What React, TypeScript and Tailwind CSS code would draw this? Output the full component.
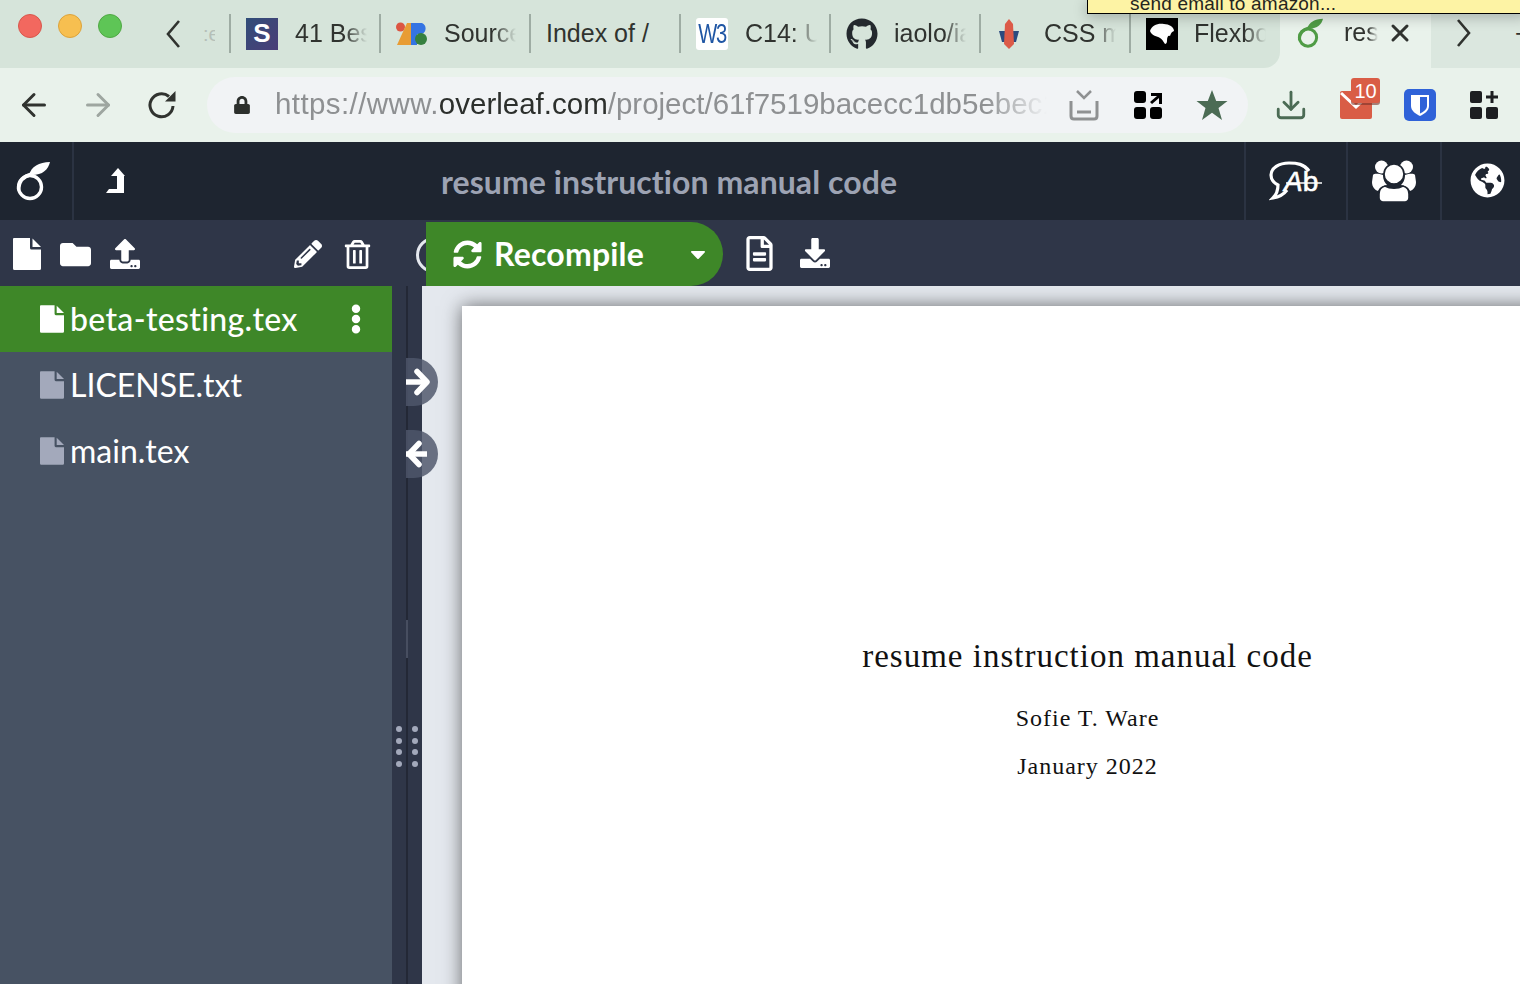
import {
  FaCaretDown,
  FaDownload,
  FaEllipsisV,
  FaFolder,
  FaGithub,
  FaGlobeAmericas,
  FaLock,
  FaPencilAlt,
  FaRegFileAlt,
  FaRegTrashAlt,
  FaSyncAlt,
  FaUpload,
} from "react-icons/fa";
import { FiArrowLeft, FiArrowRight, FiDownload, FiX } from "react-icons/fi";

const OverleafLogo = ({ size, color, weight }: { size: number; color: string; weight: number }) => (
  <svg width={size} height={size} viewBox="0 0 38 40" fill="none">
    <circle cx="15" cy="26" r="11.5" stroke={color} strokeWidth={weight} />
    <path d="M17 13C9 15 4 20 3.5 28" stroke={color} strokeWidth={weight} strokeLinecap="round" />
    <path d="M14 14C16 6 24 1 35 1C33 9 27 15 14 14Z" fill={color} />
  </svg>
);

const FileIcon = ({ width, height, color }: { width: number; height: number; color: string }) => (
  <svg width={width} height={height} viewBox="0 0 28 32" fill={color}>
    <path d="M1 0H17V10Q17 11.5 18.5 11.5H28V30.5Q28 32 26.5 32H1.5Q0 32 0 30.5V1Q0 0 1 0Z" />
    <path d="M19.5 0.5L28 9H19.5Z" />
  </svg>
);

const Chevron = ({ flip }: { flip?: boolean }) => (
  <svg width="16" height="30" viewBox="0 0 16 30" fill="none" className={flip ? "-scale-x-100" : ""}>
    <path d="M14 2L3 15L14 28" stroke="#30332f" strokeWidth="2.6" />
  </svg>
);

const Dots = () => (
  <div className="grid grid-cols-2 gap-x-[10px] gap-y-[5.5px]">
    {Array.from({ length: 8 }).map((_, i) => (
      <span key={i} className="size-[6px] rounded-full bg-[#a3a9bb]" />
    ))}
  </div>
);

const SlackS = () => (
  <div className="flex h-[32px] w-[32px] items-center justify-center bg-gradient-to-br from-[#2f4d78] to-[#4a3d78] text-[26px] font-bold text-white">S</div>
);

const SourceIcon = () => (
  <svg width="32" height="24" viewBox="0 0 32 24">
    <circle cx="4.5" cy="5" r="4.5" fill="#dc5542" />
    <path d="M11 1H15V23H1Z" fill="#e89c34" />
    <path d="M15 1H26A6 6 0 0 1 26 12H15Z" fill="#3574e3" />
    <rect x="15" y="11" width="6" height="12" fill="#3574e3" />
    <circle cx="25" cy="17" r="6" fill="#36803f" />
  </svg>
);

const W3Icon = () => (
  <div className="flex h-[32px] w-[32px] items-center justify-center rounded-[3px] bg-white text-[#1f56a4]">
    <span className="scale-x-[0.72] text-[28px] leading-none tracking-[-2px]">W3</span>
  </div>
);

const CssIcon = () => (
  <svg width="26" height="32" viewBox="0 0 26 32">
    <path d="M3 13L23 13L20 24L6 24Z" fill="#2a4a7f" />
    <path d="M9 6L13 1L17 6L18 26L13 31L8 26Z" fill="#dc5a48" />
  </svg>
);

const FlexIcon = () => (
  <div className="flex h-[32px] w-[32px] items-center justify-center bg-black">
    <svg width="26" height="22" viewBox="0 0 26 22">
      <path d="M1 8C3 2 9 0 15 1C20 1 25 4 25 8C22 9 22 11 21 13C19 12 18 14 18 18C18 20 17 21 16 21C14 18 13 16 11 15C8 13 3 13 1 8Z" fill="white" />
    </svg>
  </div>
);

const fade = "[mask-image:linear-gradient(to_right,black_70%,transparent_100%)]";

const tabs = [
  { icon: <SlackS />, gap: "w-[49px]", label: "41 Bes", text: `w-[72px] ${fade}`, box: "w-[150px] border-r-2" },
  { icon: <SourceIcon />, gap: "w-[48px]", label: "Source", text: `w-[72px] ${fade}`, box: "w-[150px] border-r-2" },
  { icon: null, gap: "w-0", label: "Index of /", text: "w-[120px]", box: "w-[150px] border-r-2" },
  { icon: <W3Icon />, gap: "w-[49px]", label: "C14: U", text: `w-[72px] ${fade}`, box: "w-[150px] border-r-2" },
  { icon: <FaGithub size={32} color="#24292e" />, gap: "w-[48px]", label: "iaolo/ia", text: `w-[72px] ${fade}`, box: "w-[150px] border-r-2" },
  { icon: <CssIcon />, gap: "w-[48px]", label: "CSS m", text: `w-[72px] ${fade}`, box: "w-[150px] border-r-2" },
  { icon: <FlexIcon />, gap: "w-[48px]", label: "Flexbox", text: `w-[72px] ${fade}`, box: "w-[149px]" },
];

function TabStrip() {
  return (
    <div className="relative flex h-[68px] shrink-0 bg-[#e9f2eb]">
      <div className="flex w-[1280px] shrink-0 rounded-br-[16px] bg-[#d6e4da]">
        <div className="flex w-[150px] shrink-0 items-center pb-[16px] pl-[18px]">
          <span className="size-[24px] rounded-full border border-[#d8574c] bg-[#f2685f]" />
          <span className="ml-[16px] size-[24px] rounded-full border border-[#dca33b] bg-[#f7bf50]" />
          <span className="ml-[16px] size-[24px] rounded-full border border-[#50a844] bg-[#5ec556]" />
        </div>
        <div className="mt-[14px] flex h-[39px] items-center">
          <div className="flex h-full w-[81px] shrink-0 items-center border-r-2 border-[#9eaca3] pl-[15px]">
            <Chevron />
            <span className="ml-[22px] w-[12px] overflow-hidden text-[20px] leading-none text-[#b5bfb8]">:e</span>
          </div>
          {tabs.map((t) => (
            <div key={t.label} className={`flex h-full shrink-0 items-center border-[#9eaca3] pl-[15px] ${t.box}`}>
              <div className={`${t.gap} flex shrink-0 items-center`}>{t.icon}</div>
              <span className={`overflow-hidden whitespace-nowrap text-[25px] text-[#30332f] ${t.text}`}>{t.label}</span>
            </div>
          ))}
        </div>
      </div>
      <div className="flex w-[151px] shrink-0 items-center pb-[2px] pl-[16px]">
        <div className="flex w-[48px] shrink-0 items-center">
          <OverleafLogo size={30} color="#4f9c45" weight={4} />
        </div>
        <span className={`w-[34px] overflow-hidden whitespace-nowrap text-[25px] text-[#30332f] ${fade}`}>resume</span>
        <FiX size={28} color="#30332f" strokeWidth={2.6} className="ml-[8px]" />
      </div>
      <div className="flex flex-1 items-center bg-[#dbe7df] pb-[2px] pl-[25px]">
        <Chevron flip />
        <span className="ml-[43px] text-[25px] leading-none text-[#30332f]">+</span>
      </div>
      <div className="absolute left-[1087px] top-[-1px] h-[15px] w-[440px] border border-black bg-[#fdf3a4] pl-[42px] text-[19px] leading-[7px] tracking-[0.2px] text-[#26251e] shadow-[0_3px_14px_rgba(0,0,0,0.25)]">
        send email to amazon...
      </div>
    </div>
  );
}

function AddressBar() {
  return (
    <div className="flex h-[74px] shrink-0 items-center bg-[#e9f2eb] pl-[16px]">
      <FiArrowLeft size={36} color="#30332f" />
      <FiArrowRight size={36} color="#9ea6a0" className="ml-[28px]" />
      <svg width="32" height="32" viewBox="0 0 32 32" fill="none" className="ml-[30px]">
        <path d="M27 17A11.5 11.5 0 1 1 23 7.5" stroke="#30332f" strokeWidth="3" />
        <path d="M19 12.5H29.5V2Z" fill="#30332f" />
      </svg>
      <div className="ml-[29px] flex h-[56px] w-[1041px] items-center rounded-full bg-[#f1f3f5] pl-[26px]">
        <FaLock size={18} color="#2c2f2c" />
        <span className="ml-[24px] w-[772px] overflow-hidden whitespace-nowrap pb-[2px] text-[29.5px] text-[#8e9092] [mask-image:linear-gradient(to_right,black_92%,transparent_100%)]">
          <span className="tracking-[0.4px]">https://www.</span>
          <span className="text-[#2c2f2c]">overleaf.com</span>/project/61f7519bacecc1db5ebec1
        </span>
        <svg width="30" height="32" viewBox="0 0 30 32" fill="none" className="ml-[22px]">
          <path d="M8 2L15 9L22 2" stroke="#8f9192" strokeWidth="2.5" />
          <path d="M2 12V27Q2 30 5 30H25Q28 30 28 27V12" stroke="#8f9192" strokeWidth="3" />
          <path d="M8 23H22" stroke="#8f9192" strokeWidth="3" />
        </svg>
        <svg width="30" height="30" viewBox="0 0 30 30" className="ml-[34px]">
          <rect x="1" y="1" width="12" height="12" rx="3" />
          <rect x="1" y="17" width="12" height="12" rx="3" />
          <rect x="17" y="17" width="12" height="12" rx="3" />
          <path d="M18 3H29V14H26V8L19 14L17 12L24 6H18Z" />
        </svg>
        <svg width="32" height="32" viewBox="0 0 32 32" fill="#4b6b54" className="ml-[33px]">
          <path d="M16 1L20.2 12H31.5L22.5 19L26 31L16 23.8L6 31L9.5 19L0.5 12H11.8Z" />
        </svg>
      </div>
      <FiDownload size={34} color="#4b6b54" className="ml-[26px]" />
      <div className="relative ml-[32px] h-[28px] w-[32px] rounded-[2px] bg-[#d95d46]">
        <svg width="32" height="20" viewBox="0 0 32 20" className="absolute left-0 top-0">
          <path d="M1 2L16 16L31 2" fill="none" stroke="white" strokeWidth="3" />
        </svg>
        <span className="absolute left-[11px] top-[-13px] flex h-[25px] w-[29px] items-center justify-center rounded-[3px] bg-[#d95d46] text-[20px] text-white shadow-[0_2px_0_rgba(120,50,40,0.6)]">10</span>
      </div>
      <svg width="32" height="32" viewBox="0 0 32 32" className="ml-[32px]">
        <rect width="32" height="32" rx="5" fill="#2f62d8" />
        <path d="M7 6H25V17C25 22 20 25 16 27C12 25 7 22 7 17Z" fill="white" />
        <path d="M16 8H23V17C23 20 20 22.5 16 24.5Z" fill="#2f62d8" />
      </svg>
      <svg width="30" height="30" viewBox="0 0 30 30" fill="#1d1f21" className="ml-[33px]">
        <rect x="1" y="1" width="12" height="12" rx="2" />
        <rect x="1" y="17" width="12" height="12" rx="2" />
        <rect x="17" y="17" width="12" height="12" rx="2" />
        <path d="M21.5 1H24.5V5.5H29V8.5H24.5V13H21.5V8.5H17V5.5H21.5Z" />
      </svg>
    </div>
  );
}

const LevelUp = () => (
  <svg width="21" height="26" viewBox="0 0 21 26" fill="white">
    <path d="M13 0L20 8H19V25H1L4 21H12V8H6Z" />
  </svg>
);

const AbIcon = () => (
  <svg width="54" height="40" viewBox="0 0 54 40" fill="none">
    <path d="M40 10C35 3 28 2 20 2C10 2 2 7 2 14C2 19 5 22 9 24C9 28 8 33 4 37C10 36 15 33 18 29" stroke="white" strokeWidth="3.2" />
    <text x="15" y="30" fontFamily="Liberation Sans, sans-serif" fontSize="28" fill="white" stroke="white" strokeWidth="0.6">
      <tspan fontStyle="italic">A</tspan>
      <tspan>b</tspan>
    </text>
    <path d="M17 22H53" stroke="white" strokeWidth="1.5" />
  </svg>
);

const UsersIcon = () => (
  <svg width="44" height="42" viewBox="0 0 44 42" fill="white">
    <circle cx="9.5" cy="7" r="6.5" />
    <circle cx="34.5" cy="7" r="6.5" />
    <path d="M1 15C3 13 7 14 11 15C11 20 13 23 15 25C10 26 7 28 6 31C3 30 0 27 0 22Z" />
    <path d="M43 15C41 13 37 14 33 15C33 20 31 23 29 25C34 26 37 28 38 31C41 30 44 27 44 22Z" />
    <g stroke="#1e2530" strokeWidth="1.6">
      <circle cx="22" cy="14" r="10" />
      <path d="M13 26C18 29 26 29 31 26C35 27 37 30 37 34V38C37 40 35 42 33 42H11C9 42 7 40 7 38V34C7 30 9 27 13 26Z" />
    </g>
  </svg>
);

function Header() {
  return (
    <div className="flex h-[78px] shrink-0 items-center bg-[#1e2530]">
      <div className="flex h-full w-[74px] items-center border-r-2 border-[#2b3342] pl-[14px]">
        <OverleafLogo size={40} color="white" weight={3.4} />
      </div>
      <div className="flex h-full w-[83px] items-center justify-center">
        <LevelUp />
      </div>
      <div className="mt-[1px] w-[1088px] pl-[284px] text-[32px] font-bold tracking-[0.07px] text-[#9da3b3]">resume instruction manual code</div>
      <div className="-ml-px flex h-full w-[102px] items-center justify-center border-l-2 border-[#2b3342]">
        <AbIcon />
      </div>
      <div className="flex h-full w-[94px] items-center justify-center border-l-2 border-[#2b3342]">
        <UsersIcon />
      </div>
      <div className="flex h-full flex-1 items-center justify-center border-l-2 border-[#2b3342] pb-[2px] pl-[12px]">
        <FaGlobeAmericas size={35} color="white" />
      </div>
    </div>
  );
}

function Toolbar() {
  return (
    <div className="flex h-[66px] shrink-0 bg-[#2f3648]">
      <div className="flex w-[392px] shrink-0 items-center pl-[13px] pt-[2px] text-white">
        <FileIcon width={28} height={32} color="white" />
        <FaFolder size={31} className="ml-[19px]" />
        <FaUpload size={30} className="ml-[19px]" />
        <FaPencilAlt size={28} className="ml-[154px]" />
        <FaRegTrashAlt size={29} className="ml-[21px]" />
      </div>
      <div className="ml-[24px] mt-[17px] size-[36px] shrink-0 rounded-full border-[3px] border-[#e4e8ee]" />
      <div className="relative -ml-[26px] flex h-[64px] w-[297px] items-center self-end rounded-r-[32px] bg-[#3e8728] pl-[27px] text-white">
        <FaSyncAlt size={29} />
        <span className="ml-[12px] text-[32px] font-bold tracking-[0.2px]">Recompile</span>
        <FaCaretDown size={24} className="ml-[42px]" />
      </div>
      <div className="flex items-center pl-[19px] text-white">
        <FaRegFileAlt size={35} />
        <FaDownload size={30} className="ml-[23px]" />
      </div>
    </div>
  );
}

const files = ["beta-testing.tex", "LICENSE.txt", "main.tex"];

function FileTree() {
  return (
    <div className="w-[392px] shrink-0 bg-[#475263]">
      {files.map((name, i) => (
        <div
          key={name}
          className={`flex h-[66px] items-center pl-[40px] text-[32px] text-white ${i === 0 ? "bg-[#3e8728] font-medium tracking-[0.33px]" : ""}`}
        >
          <FileIcon width={24} height={28} color={i === 0 ? "white" : "#a3a9bb"} />
          <span className="ml-[6px]">{name}</span>
          {i === 0 && <FaEllipsisV size={30} className="ml-auto mr-[21px]" />}
        </div>
      ))}
    </div>
  );
}

const ArrowGlyph = ({ left }: { left?: boolean }) => (
  <svg width="24" height="28" viewBox="0 0 24 28" fill="none" className={left ? "-scale-x-100" : ""}>
    <path d={left ? "M3 14H24" : "M0 14H20"} stroke="white" strokeWidth="5.5" />
    <path d="M11 3.5L21 14L11 24.5" stroke="white" strokeWidth="5.5" strokeLinecap="round" strokeLinejoin="round" />
  </svg>
);

function Splitter() {
  return (
    <div className="relative w-[30px] shrink-0 bg-[#2f3648]">
      <div className="absolute left-[14px] top-0 h-full w-[2px] bg-[#232836]" />
      <div className="absolute left-[14px] top-[334px] h-[38px] w-[2px] bg-[#474e60]" />
      <div className="absolute left-[4px] top-[440px]">
        <Dots />
      </div>
      <div className="absolute left-[14px] top-[72px] z-10 flex h-[48px] w-[32px] items-center overflow-hidden rounded-r-full bg-[rgba(78,87,107,0.83)]">
        <ArrowGlyph />
      </div>
      <div className="absolute left-[14px] top-[144px] z-10 flex h-[48px] w-[32px] items-center overflow-hidden rounded-r-full bg-[rgba(78,87,107,0.83)]">
        <ArrowGlyph left />
      </div>
    </div>
  );
}

function Pdf() {
  return (
    <div className="flex-1 overflow-hidden bg-[#e4e8ee] pl-[40px] pt-[20px]">
      <div className="flex h-[900px] w-[1251px] flex-col items-center bg-white pt-[328px] text-[#111] shadow-[0_0_18px_rgba(0,0,0,0.55)] [font-family:'Liberation_Serif',serif]">
        <div className="text-[33px] leading-[44px] tracking-[1px]">resume instruction manual code</div>
        <div className="mt-[26px] text-[24px] leading-[28px] tracking-[1px]">Sofie T. Ware</div>
        <div className="mt-[20px] text-[24px] leading-[28px] tracking-[1px]">January 2022</div>
      </div>
    </div>
  );
}

export default function App() {
  return (
    <div className="flex h-[984px] w-[1520px] flex-col overflow-hidden bg-[#1e2530] [font-family:'Liberation_Sans',sans-serif]">
      <TabStrip />
      <AddressBar />
      <div className="flex min-h-0 flex-1 flex-col [font-family:Lato,sans-serif] [font-variant-ligatures:none]">
        <Header />
        <Toolbar />
        <div className="flex min-h-0 flex-1">
          <FileTree />
          <Splitter />
          <Pdf />
        </div>
      </div>
    </div>
  );
}
